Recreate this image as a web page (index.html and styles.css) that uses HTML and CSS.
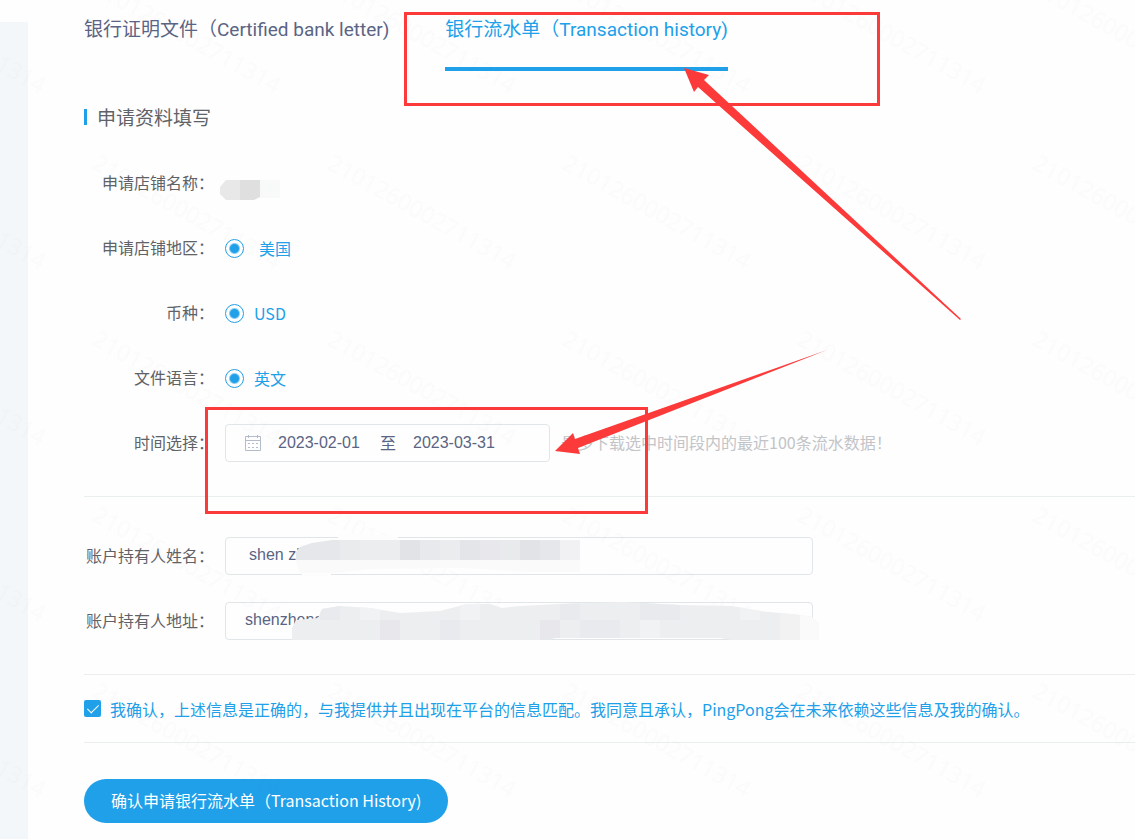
FILE: index.html
```html
<!DOCTYPE html>
<html lang="zh-CN">
<head>
  <meta charset="utf-8">
  <title>银行流水单（Transaction history)</title>
  <link rel="stylesheet" href="styles.css">
</head>
<body>
  <div class="page">
    <aside class="side"></aside>

    <main class="content">
      <nav class="tabs">
        <a href="#letter" class="tab">银行证明文件（Certified bank letter)</a>
        <a href="#history" class="tab active">银行流水单（Transaction history)</a>
      </nav>

      <h2 class="section-title">申请资料填写</h2>

      <form id="historyForm">
        <div class="form-group">
          <div class="form-row">
            <span class="row-label">申请店铺名称：</span>
          </div>
          <div class="form-row">
            <span class="row-label">申请店铺地区：</span>
            <input type="radio" id="region" name="region" checked>
            <label for="region" class="radio-text wide">美国</label>
          </div>
          <div class="form-row">
            <span class="row-label">币种：</span>
            <input type="radio" id="currency" name="currency" checked>
            <label for="currency" class="radio-text">USD</label>
          </div>
          <div class="form-row">
            <span class="row-label">文件语言：</span>
            <input type="radio" id="language" name="language" checked>
            <label for="language" class="radio-text">英文</label>
          </div>
          <div class="form-row">
            <label for="startDate" class="row-label">时间选择：</label>
            <div class="date-range">
              <svg class="calendar" viewBox="0 0 18 18" width="18" height="18" fill="none" stroke="#b4bccc">
                <path d="M1.5 2.5h15v14h-15zM1.5 6.5h15M4.5 1v3M13.5 1v3"/>
                <path d="M4 9.5h10M4 13.5h10" stroke-dasharray="2 2"/>
              </svg>
              <input type="text" id="startDate" name="startDate" value="2023-02-01">
              <span class="to">至</span>
              <input type="text" id="endDate" name="endDate" value="2023-03-31" aria-label="结束日期">
            </div>
            <span class="hint">最多下载选中时间段内的最近100条流水数据！</span>
          </div>
        </div>

        <div class="form-group holder">
          <div class="form-row">
            <label for="holderName" class="row-label">账户持有人姓名：</label>
            <input type="text" class="text-input name-input" id="holderName" name="holderName" value="shen zh">
          </div>
          <div class="form-row">
            <label for="holderAddress" class="row-label">账户持有人地址：</label>
            <input type="text" class="text-input" id="holderAddress" name="holderAddress" value="shenzhens">
          </div>
        </div>

        <div class="consent">
          <input type="checkbox" id="agree" name="agree" checked>
          <label for="agree">我确认，上述信息是正确的，与我提供并且出现在平台的信息匹配。我同意且承认，PingPong会在未来依赖这些信息及我的确认。</label>
        </div>

        <button type="submit" class="btn-submit">确认申请银行流水单（Transaction History)</button>
      </form>
    </main>
  </div>

  <!-- watermark, masks and red marks lie over the form -->
  <svg class="overlay" aria-hidden="true">
    <defs>
      <pattern id="watermark" x="85" y="144" width="235" height="176" patternUnits="userSpaceOnUse">
        <text class="watermark-text" transform="translate(6 24) rotate(29)">2101260002711314</text>
      </pattern>
      <clipPath id="nameClip">
        <path d="M296 562v-10l4-5 12-4 20-3h248v20h50l-6 8-14 4h-78l-70-4-90 1-38 4h-34z"/>
      </clipPath>
      <clipPath id="addressClip">
        <path d="M292 640v-12l4-8 22-2 4-9 18-3 30 2 30 5 40-2 27-7h23l12 4 18-2 38-2 64-2 58 3 52 1 28 5 40 4 12 2 7 6v17h-88l-10-2H555l-8 2z"/>
      </clipPath>
    </defs>
    <rect width="100%" height="100%" fill="url(#watermark)"/>

    <path d="M240 180h-14l-6 7v7l6 6h14z" fill="#e8e8e8"/>
    <path d="M240 180h20v17l-6 3h-14z" fill="#dfdfdf"/>
    <path d="M260 180h20v18h-20z" fill="#f8fafa"/>

    <path d="M338 535h60v5h-60zM302 572h29v4h-29z" fill="#fdfdfd"/>
    <g clip-path="url(#nameClip)">
      <path d="M290 540h340v34H290z" fill="#fafafb"/>
      <path d="M290 540h50v20h-50z" fill="#e6e7ea"/>
      <path d="M340 540h20v20h-20z" fill="#eaebed"/>
      <path d="M360 540h40v20h-40z" fill="#ecedef"/>
      <path d="M400 540h20v20h-20z" fill="#e2e3e6"/>
      <path d="M420 540h20v20h-20z" fill="#e8e9ec"/>
      <path d="M440 540h20v20h-20z" fill="#ebecee"/>
      <path d="M460 540h20v20h-20z" fill="#e4e5e9"/>
      <path d="M480 540h20v20h-20z" fill="#e8e7eb"/>
      <path d="M500 540h20v20h-20z" fill="#e9eaeb"/>
      <path d="M520 540h20v20h-20z" fill="#e1e3e6"/>
      <path d="M540 540h20v20h-20z" fill="#e6e7eb"/>
      <path d="M560 540h20v20h-20z" fill="#f1f1f3"/>
      <path d="M580 540h50v32h-50z" fill="#fefefe"/>
    </g>

    <g clip-path="url(#addressClip)">
      <path d="M290 600h530v40H290z" fill="#edeef0"/>
      <path d="M320 600h20v20h-20zM440 620h20v20h-20zM560 600h20v20h-20zM640 600h40v20h-40zM580 620h40v20h-40z" fill="#e9eaee"/>
      <path d="M460 600h20v20h-20zM640 620h20v20h-20zM740 600h20v20h-20zM360 600h20v20h-20z" fill="#f1f2f4"/>
      <path d="M540 620h20v20h-20zM380 620h20v20h-20z" fill="#e8e7ec"/>
      <path d="M780 600h20v40h-20z" fill="#f2f2f3"/>
      <path d="M800 600h20v40h-20z" fill="#fafafa"/>
    </g>

    <g fill="none" stroke="#fc3a3a" stroke-width="3">
      <path d="M405.500 13.500h473v91h-473z"/>
      <path d="M206.500 408.500h440v104h-440z"/>
    </g>
    <g fill="#fc3a3a">
      <path d="M684 68l25 7-5 5 257 239-1 1L698 87l-4 5z"/>
      <path d="M555 451l18-18 2 6 252-89-249 98 2 6z"/>
    </g>
  </svg>
</body>
</html>
```

FILE: styles.css
```css
* {
  box-sizing: border-box;
}

body {
  margin: 0;
  background-color: #fefefe;
  color: #606266;
  font-family: "Noto Sans CJK SC", sans-serif;
  font-size: 16px;
  position: relative;
  overflow: hidden;
}

.page {
  display: flex;
  min-height: 100vh;
  padding-top: 22px;
}

.side {
  width: 28px;
  flex-shrink: 0;
  background-color: #f3f7fa;
}

.content {
  flex: 1;
  min-width: 0;
  padding-left: 56px;
}

/* tabs */
.tabs {
  display: flex;
  gap: 56px;
  height: 49px;
}

.tab {
  color: #5a6484;
  font-family: Roboto, "Noto Sans CJK SC", sans-serif;
  font-size: 19px;
  line-height: 16px;
  text-decoration: none;
  white-space: nowrap;
}

.tab.active {
  color: #20a0e9;
  border-bottom: 4px solid #20a0e9;
}

.section-title {
  display: flex;
  align-items: center;
  gap: 10px;
  margin: 31px 0 32px;
  font-size: 19px;
  font-weight: normal;
  line-height: 30px;
}

.section-title::before {
  content: "";
  width: 3px;
  height: 16px;
  background-color: #20a0e9;
}

/* form rows */
.form-group {
  display: flex;
  flex-direction: column;
  gap: 27px;
  padding-bottom: 34px;
  border-bottom: 1px solid #ebeeee;
}

.form-group.holder {
  padding-top: 40px;
}

.form-row {
  display: flex;
  align-items: center;
  height: 38px;
}

.row-label {
  width: 130px;
  margin-right: 11px;
  padding-bottom: 2px;
  flex-shrink: 0;
  text-align: right;
  white-space: nowrap;
}

input[type="radio"] {
  appearance: none;
  width: 19px;
  height: 19px;
  margin: 0;
  border: 1px solid #20a0e9;
  border-radius: 50%;
  background: radial-gradient(circle, #20a0e9 4px, #fff 6px);
}

.radio-text {
  margin-left: 10px;
  color: #20a0e9;
}

.radio-text.wide {
  margin-left: 15px;
}

.date-range {
  display: flex;
  align-items: center;
  width: 325px;
  height: 38px;
  padding-left: 18px;
  border: 1px solid #e0e6e8;
  border-radius: 4px;
}

.date-range input {
  width: 84px;
  padding: 0;
  border: none;
  background: none;
}

.date-range input,
.text-input {
  color: #5a6484;
  font-family: "Liberation Sans", sans-serif;
  font-size: 16px;
}

.calendar {
  margin-right: 16px;
}

.to {
  margin: 0 17px 0 18px;
  padding-bottom: 2px;
  color: #5a6484;
}

.hint {
  margin-left: 11px;
  padding-bottom: 2px;
  color: #c2c4c8;
  white-space: nowrap;
}

.text-input {
  flex: 1;
  max-width: 588px;
  height: 38px;
  padding: 0 19px 2px;
  border: 1px solid #e0e6e8;
  border-radius: 4px;
  background: none;
}

.name-input {
  padding-left: 23px;
}

/* consent line */
.consent {
  display: flex;
  align-items: center;
  gap: 9px;
  height: 68px;
  border-bottom: 1px solid #ebeeee;
  color: #20a0e9;
  white-space: nowrap;
}

input[type="checkbox"] {
  appearance: none;
  display: flex;
  justify-content: center;
  width: 17px;
  height: 17px;
  margin: 0;
  border-radius: 2px;
  background-color: #20a0e9;
}

input[type="checkbox"]:checked::before {
  content: "";
  width: 5px;
  height: 10px;
  margin-top: 2px;
  border: solid #fff;
  border-width: 0 1px 1px 0;
  transform: rotate(45deg);
}

.btn-submit {
  height: 44px;
  margin-top: 36px;
  padding: 0 27px 2px;
  border: none;
  border-radius: 22px;
  background-color: #20a0e9;
  color: #fff;
  font-family: inherit;
  font-size: 16px;
  cursor: pointer;
}

.overlay {
  position: absolute;
  top: 0;
  left: 0;
  width: 100%;
  height: 100%;
  pointer-events: none;
}

.watermark-text {
  font-family: "Noto Sans", sans-serif;
  font-size: 23px;
  fill: #000;
  fill-opacity: 0.01;
}
```
